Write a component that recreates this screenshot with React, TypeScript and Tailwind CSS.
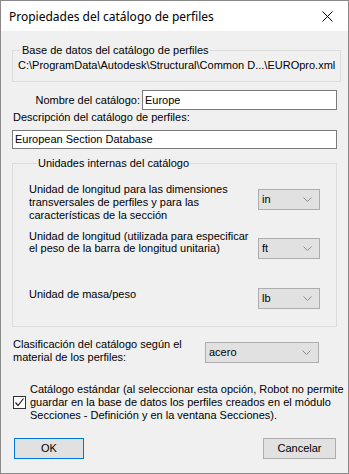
import React from "react";

const F = { fontFamily: '"Liberation Sans", Arial, sans-serif' };

function Chevron() {
  return (
    <svg width="9" height="6" viewBox="0 0 9 6" className="shrink-0">
      <polyline points="0.5,0.5 4.5,4.5 8.5,0.5" fill="none" stroke="#8a8a8a" strokeWidth="1" />
    </svg>
  );
}

function Select({ value, w, mt }: { value: string; w: string; mt: string }) {
  return (
    <div className={`${w} ${mt} h-[21px] bg-[#e1e1e1] border border-[#adadad] flex items-center justify-between pl-[3px] pr-[7px] shrink-0`}>
      <span className="text-[11px] leading-[13px] text-black">{value}</span>
      <Chevron />
    </div>
  );
}

export default function App() {
  return (
    <div
      className="w-[349px] h-[474px] bg-[#f0f0f0] border border-[#8a8a8a] flex flex-col text-[11px] leading-[13px] text-black overflow-hidden"
      style={F}
    >
      <div className="h-[30px] bg-white flex items-center justify-between pl-[8px] pr-[15px] shrink-0">
        <span className="text-[12px]" style={{ fontFamily: '"Noto Sans", "Open Sans", sans-serif' }}>
          Propiedades del catálogo de perfiles
        </span>
        <svg width="11" height="11" viewBox="0 0 11 11">
          <path d="M0.5 0.5 L10.5 10.5 M10.5 0.5 L0.5 10.5" stroke="#000" strokeWidth="1" />
        </svg>
      </div>

      <div className="flex flex-col px-[11px]">
        <fieldset className="mt-[13px] border border-[#dcdcdc] h-[38px] px-[5px]">
          <legend className="ml-[3px] px-[1px] leading-[13px]">Base de datos del catálogo de perfiles</legend>
          <div className="mt-[2px] whitespace-nowrap">C:\ProgramData\Autodesk\Structural\Common D...\EUROpro.xml</div>
        </fieldset>

        <div className="mt-[8px] flex items-center">
          <span className="w-[130px] text-right pr-[2px]">Nombre del catálogo:</span>
          <div className="flex-1 h-[20px] bg-white border border-[#7a7a7a] flex items-center pl-[2px]">Europe</div>
        </div>

        <div className="mt-[1px] pl-[1px]">Descripción del catálogo de perfiles:</div>
        <div className="mt-[6px] h-[19px] bg-white border border-[#7a7a7a] flex items-center pl-[2px]">
          European Section Database
        </div>

        <fieldset className="mt-[8px] border border-[#dcdcdc] h-[170px] pl-[16px] pr-[16px]">
          <legend className="ml-[8px] px-[1px] leading-[13px]">Unidades internas del catálogo</legend>
          <div className="mt-[13px] flex items-start justify-between">
            <div className="whitespace-nowrap">
              Unidad de longitud para las dimensiones
              <br />
              transversales de perfiles y para las
              <br />
              características de la sección
            </div>
            <Select value="in" w="w-[62px]" mt="mt-[6px]" />
          </div>
          <div className="mt-[8px] flex items-start justify-between">
            <div className="whitespace-nowrap leading-[12px]">
              Unidad de longitud (utilizada para especificar
              <br />
              el peso de la barra de longitud unitaria)
            </div>
            <Select value="ft" w="w-[62px]" mt="mt-[8px]" />
          </div>
          <div className="mt-[29px] flex items-start justify-between">
            <div className="mt-[0px]">Unidad de masa/peso</div>
            <Select value="lb" w="w-[62px]" mt="mt-[0px]" />
          </div>
        </fieldset>

        <div className="mt-[11px] flex items-start">
          <div className="w-[193px] pl-[1px] whitespace-nowrap">
            Clasificación del catálogo según el
            <br />
            material de los perfiles:
          </div>
          <Select value="acero" w="w-[114px]" mt="mt-[4px]" />
        </div>

        <div className="mt-[19px] flex items-center">
          <div className="w-[13px] h-[13px] bg-white border border-[#333333] flex items-center justify-center shrink-0 ml-[1px]">
            <svg width="11" height="11" viewBox="0 0 11 11">
              <polyline points="1.5,5.5 4,8.5 9.5,1.5" fill="none" stroke="#222" strokeWidth="1.2" />
            </svg>
          </div>
          <div className="ml-[4px] whitespace-nowrap">
            Catálogo estándar (al seleccionar esta opción, Robot no permite
            <br />
            guardar en la base de datos los perfiles creados en el módulo
            <br />
            Secciones - Definición y en la ventana Secciones).
          </div>
        </div>

        <div className="mt-[16px] flex justify-between">
          <div className="ml-[2px] w-[70px] h-[21px] bg-[#e1e1e1] border border-[#0078d7] flex items-center justify-center">OK</div>
          <div className="mr-[1px] w-[73px] h-[21px] bg-[#e1e1e1] border border-[#adadad] flex items-center justify-center">Cancelar</div>
        </div>
      </div>
    </div>
  );
}
